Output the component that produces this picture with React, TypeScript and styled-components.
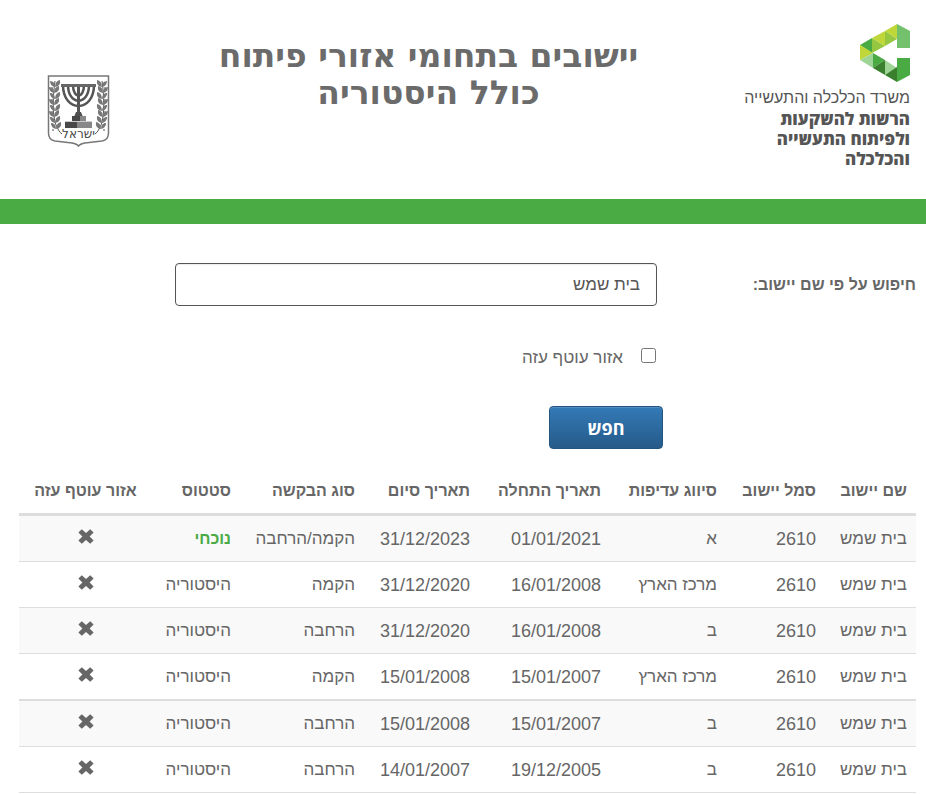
import React, { useState } from 'react';
import styled, { createGlobalStyle } from 'styled-components';

const GlobalStyle = createGlobalStyle`
  *, *::before, *::after { box-sizing: border-box; }
  body {
    margin: 0;
    background: #fff;
    color: #666;
    font-family: "Liberation Sans", Arial, sans-serif;
    font-size: 17px;
    line-height: 24px;
  }
`;

const Page = styled.div`
  direction: rtl;
`;

const Header = styled.header`
  display: grid;
  grid-template-columns: 269fr auto 170fr;
  align-items: start;
  padding: 24px 16px 30px 47px;
`;

const Brand = styled.div`
  display: flex;
  flex-direction: column;
  align-items: flex-start;
  color: #555;
`;

const Ministry = styled.div`
  margin: 6px 0 1px;
  font-size: 16px;
  line-height: 20px;
  white-space: nowrap;
`;

const Authority = styled.div`
  font-family: "Open Sans", "Liberation Sans", sans-serif;
  font-size: 17px;
  font-weight: 800;
  line-height: 20px;
  white-space: nowrap;
`;

const Title = styled.h1`
  margin: 13px 0 0;
  color: #6b6b6b;
  font-family: "DejaVu Sans", sans-serif;
  font-size: 33px;
  font-weight: 700;
  line-height: 37px;
  text-align: center;
`;

const TitleLine = styled.span`
  display: block;
`;

const EmblemSlot = styled.div`
  display: flex;
  justify-content: flex-end;
  padding-top: 51px;
`;

const GreenBar = styled.div`
  height: 25px;
  background: #4aab44;
`;

const SearchForm = styled.form`
  display: grid;
  grid-template-columns: 253fr 488fr 165fr;
  align-items: center;
  padding: 39px 10px 0;
`;

const SearchLabel = styled.label`
  font-size: 16px;
  font-weight: 700;
`;

const Field = styled.div`
  grid-column: 2;
  padding-inline-start: 6px;
`;

const TextInput = styled.input`
  display: block;
  width: 100%;
  height: 43px;
  padding: 0 16px;
  border: 1px solid #555;
  border-radius: 4px;
  box-shadow: inset 0 1px 1px rgba(0, 0, 0, 0.08);
  background: #fff;
  color: #555;
  font: inherit;
`;

const CheckField = styled(Field)`
  display: flex;
  align-items: center;
  gap: 18px;
  margin-top: 40px;
`;

const Checkbox = styled.input`
  width: 15px;
  height: 15px;
  margin: 0 1px 5px 0;
`;

const SearchButton = styled.button`
  grid-column: 2;
  justify-self: start;
  width: 114px;
  height: 43px;
  margin-top: 36px;
  border: 1px solid #245580;
  border-radius: 4px;
  background: linear-gradient(#337ab7, #265a88);
  box-shadow: inset 0 1px 0 rgba(255, 255, 255, 0.15);
  color: #fff;
  font-family: "Open Sans", "Liberation Sans", sans-serif;
  font-size: 18px;
  font-weight: 700;
`;

const TableWrap = styled.main`
  padding: 18px 10px 0 19px;
`;

const Table = styled.table`
  width: 100%;
  table-layout: fixed;
  border-collapse: separate;
  border-spacing: 0;
`;

const Col = styled.col<{ $w: number }>`
  width: ${(p) => p.$w}px;
`;

const HeadCell = styled.th<{ $center?: boolean }>`
  padding: 12px 9px 10px;
  border-bottom: 3px solid #ddd;
  font-size: 16px;
  text-align: ${(p) => (p.$center ? 'center' : 'right')};
  white-space: nowrap;
`;

const Row = styled.tr<{ $groupEnd?: boolean }>`
  &:nth-child(odd) { background: #f9f9f9; }
  & > td {
    height: ${(p) => (p.$groupEnd ? 47 : 46)}px;
    border-bottom: ${(p) => (p.$groupEnd ? 2 : 1)}px solid #ddd;
  }
`;

const Cell = styled.td<{ $center?: boolean; $number?: boolean }>`
  padding: 10px 9px;
  font-size: ${(p) => (p.$number ? 18 : 17)}px;
  text-align: ${(p) => (p.$center ? 'center' : 'right')};
  white-space: nowrap;
`;

const Current = styled.strong`
  color: #4aab44;
  font-size: 16px;
`;

const CrossSvg = styled.svg`
  display: inline-block;
  vertical-align: baseline;
`;

function Cross() {
  return (
    <CrossSvg width="16" height="15" viewBox="0 0 16 15" role="img" aria-label="לא">
      <path
        fill="#666"
        d="M3.800 .3 8 4 12.200 .3 15.600 3.600 11.600 7.500 15.600 11.400 12.200 14.700 8 11 3.800 14.700 .4 11.400 4.400 7.500 .4 3.600Z"
      />
    </CrossSvg>
  );
}

function MinistryLogo() {
  return (
    <svg width="50" height="58" viewBox="0 0 50 58" aria-hidden="true">
      <path fill="#74c16d" d="M37 0 50 7V24H37Z" />
      <path fill="#bfd738" d="M37 0V15L25 7Z" />
      <path fill="#95c741" d="M25 7 37 15 25 22ZM12 14 25 22 12 29Z" />
      <path fill="#bfd738" d="M25 7V22L12 14Z" />
      <path fill="#4aab44" d="M12 14V29L0 21Z" />
      <path fill="#bfd738" d="M0 21 13 29 0 36Z" />
      <path fill="#9ed597" d="M13 29V44L0 36Z" />
      <path fill="#4aab44" d="M13 29 25 36 13 44Z" />
      <path fill="#3a7f2d" d="M13 44 25 36V51Z" />
      <path fill="#9ed597" d="M25 36 37 44 25 51Z" />
      <path fill="#3a7f2d" d="M25 51 37 43V58Z" />
      <path fill="#4aab44" d="M37 34H50V51L37 58Z" />
    </svg>
  );
}

const leafRows = [9, 15, 21, 27, 33, 39, 45, 51];

function Branch() {
  return (
    <g>
      <path d="M8 6C6 20 5 40 9 50C11 54 12 57 15 59" fill="none" stroke="#555" strokeWidth="1" />
      {leafRows.map((y, i) => (
        <g key={y} transform={`translate(${i > 5 ? 7 + (i - 5) : 8 - (i % 2)} ${y})`}>
          <path d="M0 3Q-5 2-5-3Q0-3 0 3ZM0 3Q6 2 5-4Q0-3 0 3Z" fill="#777" />
          <circle cx="-3" cy="4" r="1" fill="#888" />
        </g>
      ))}
    </g>
  );
}

function Emblem() {
  return (
    <svg width="63" height="72" viewBox="0 0 63 72" role="img" aria-label="סמל מדינת ישראל">
      <path
        d="M1.500 1H61.500V58Q61.500 65 55 66L38 68Q33 69 31.500 71Q30 69 25 68L8 66Q1.500 65 1.500 58Z"
        fill="#fff"
        stroke="#777"
        strokeWidth="1.500"
      />
      <Branch />
      <g transform="translate(63 0) scale(-1 1)">
        <Branch />
      </g>
      <g fill="none" stroke="#555" strokeWidth="2.500">
        <path d="M16 10C16 38 47 38 47 10M21 10C21 31 42 31 42 10M26 10C26 24 37 24 37 10" />
        <path d="M31.500 9V41" strokeWidth="3" />
      </g>
      <path d="M14 9H49V12H14Z" fill="#666" />
      <path d="M29 37H34L36 42H27Z" fill="#505050" />
      <path d="M25 41H39V46H45V53H18V47H25Z" fill="#888" />
      <path d="M25 41H33V47H30V53H18V47H25Z" fill="#484848" />
      <path d="M18 46.500H45" stroke="#ccc" strokeWidth="1" />
      <text
        x="31.500"
        y="63"
        textAnchor="middle"
        fontSize="12"
        fontWeight="400"
        fontFamily="DejaVu Sans"
        fill="#444"
      >
        ישראל
      </text>
    </svg>
  );
}

const columns = [
  { title: 'שם יישוב', width: 91 },
  { title: 'סמל יישוב', width: 99 },
  { title: 'סיווג עדיפות', width: 116 },
  { title: 'תאריך התחלה', width: 131 },
  { title: 'תאריך סיום', width: 115 },
  { title: 'סוג הבקשה', width: 124 },
  { title: 'סטטוס', width: 88 },
  { title: 'אזור עוטף עזה', width: 133, center: true },
];

const rows = [
  { priority: 'א', start: '01/01/2021', end: '31/12/2023', type: 'הקמה/הרחבה', current: true },
  { priority: 'מרכז הארץ', start: '16/01/2008', end: '31/12/2020', type: 'הקמה' },
  { priority: 'ב', start: '16/01/2008', end: '31/12/2020', type: 'הרחבה' },
  { priority: 'מרכז הארץ', start: '15/01/2007', end: '15/01/2008', type: 'הקמה', groupEnd: true },
  { priority: 'ב', start: '15/01/2007', end: '15/01/2008', type: 'הרחבה' },
  { priority: 'ב', start: '19/12/2005', end: '14/01/2007', type: 'הרחבה' },
];

export default function App() {
  const [query, setQuery] = useState('בית שמש');
  const [gaza, setGaza] = useState(false);

  return (
    <Page dir="rtl" lang="he">
      <GlobalStyle />
      <Header>
        <Brand>
          <MinistryLogo />
          <Ministry>משרד הכלכלה והתעשייה</Ministry>
          <Authority>
            הרשות להשקעות
            <br />
            ולפיתוח התעשייה
            <br />
            והכלכלה
          </Authority>
        </Brand>
        <Title>
          <TitleLine>יישובים בתחומי אזורי פיתוח</TitleLine>
          <TitleLine>כולל היסטוריה</TitleLine>
        </Title>
        <EmblemSlot>
          <Emblem />
        </EmblemSlot>
      </Header>
      <GreenBar />
      <SearchForm onSubmit={(e) => e.preventDefault()}>
        <SearchLabel htmlFor="town">חיפוש על פי שם יישוב:</SearchLabel>
        <Field>
          <TextInput id="town" type="text" value={query} onChange={(e) => setQuery(e.target.value)} />
        </Field>
        <CheckField>
          <Checkbox id="gaza" type="checkbox" checked={gaza} onChange={(e) => setGaza(e.target.checked)} />
          <label htmlFor="gaza">אזור עוטף עזה</label>
        </CheckField>
        <SearchButton type="submit">חפש</SearchButton>
      </SearchForm>
      <TableWrap>
        <Table>
          <colgroup>
            {columns.map((c) => (
              <Col key={c.title} $w={c.width} />
            ))}
          </colgroup>
          <thead>
            <tr>
              {columns.map((c) => (
                <HeadCell key={c.title} scope="col" $center={c.center}>
                  {c.title}
                </HeadCell>
              ))}
            </tr>
          </thead>
          <tbody>
            {rows.map((r, i) => (
              <Row key={i} $groupEnd={r.groupEnd}>
                <Cell>בית שמש</Cell>
                <Cell $number>2610</Cell>
                <Cell>{r.priority}</Cell>
                <Cell $number>{r.start}</Cell>
                <Cell $number>{r.end}</Cell>
                <Cell>{r.type}</Cell>
                <Cell>{r.current ? <Current>נוכחי</Current> : 'היסטוריה'}</Cell>
                <Cell $center>
                  <Cross />
                </Cell>
              </Row>
            ))}
          </tbody>
        </Table>
      </TableWrap>
    </Page>
  );
}
